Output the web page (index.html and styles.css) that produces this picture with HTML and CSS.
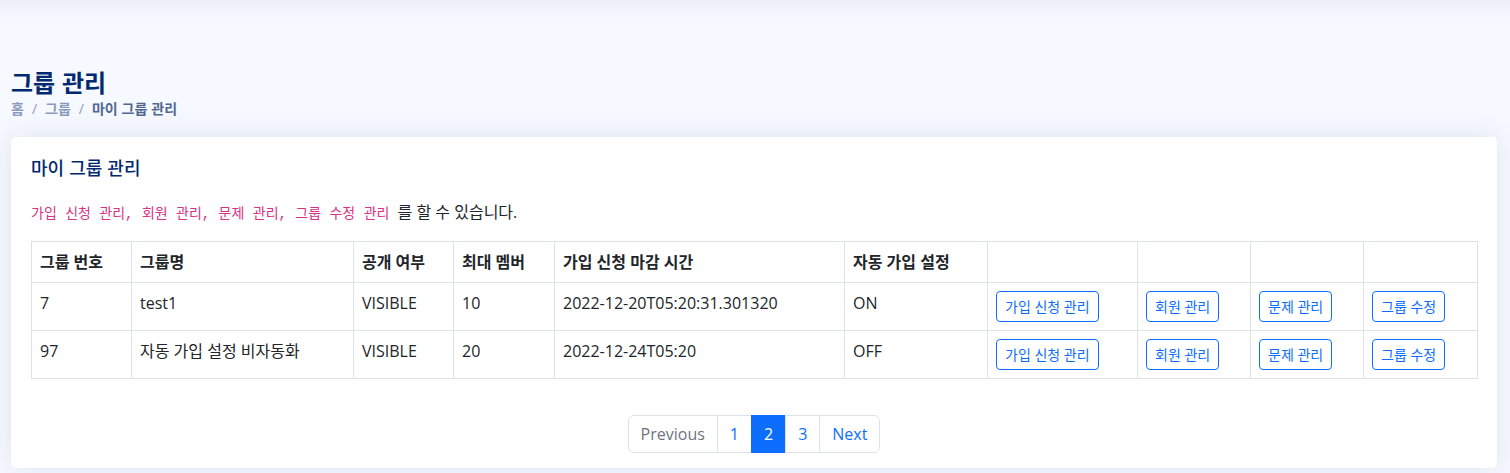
FILE: index.html
```html
<!DOCTYPE html>
<html lang="ko">
<head>
<meta charset="utf-8">
<title>그룹 관리</title>
<link rel="stylesheet" href="styles.css">
</head>
<body>
<main class="main">
  <div class="pagetitle">
    <h1 class="pagetitle-h">그룹 관리</h1>
    <ol class="breadcrumb">
      <li class="crumb">홈</li>
      <li class="crumb sep">그룹</li>
      <li class="crumb sep active">마이 그룹 관리</li>
    </ol>
  </div>
  <section class="card">
    <div class="card-body">
      <h5 class="card-title">마이 그룹 관리</h5>
      <p class="desc"><code class="code">가입 신청 관리, 회원 관리, 문제 관리, 그룹 수정 관리</code> 를 할 수 있습니다.</p>
      <table class="table">
        <colgroup>
          <col class="c1"><col class="c2"><col class="c3"><col class="c4"><col class="c5">
          <col class="c6"><col class="c7"><col class="c8"><col class="c9"><col class="c10">
        </colgroup>
        <thead>
          <tr>
            <th>그룹 번호</th>
            <th>그룹명</th>
            <th>공개 여부</th>
            <th>최대 멤버</th>
            <th>가입 신청 마감 시간</th>
            <th>자동 가입 설정</th>
            <th></th><th></th><th></th><th></th>
          </tr>
        </thead>
        <tbody>
          <tr>
            <td>7</td>
            <td>test1</td>
            <td>VISIBLE</td>
            <td>10</td>
            <td>2022-12-20T05:20:31.301320</td>
            <td>ON</td>
            <td><button class="btn">가입 신청 관리</button></td>
            <td><button class="btn">회원 관리</button></td>
            <td><button class="btn">문제 관리</button></td>
            <td><button class="btn">그룹 수정</button></td>
          </tr>
          <tr>
            <td>97</td>
            <td>자동 가입 설정 비자동화</td>
            <td>VISIBLE</td>
            <td>20</td>
            <td>2022-12-24T05:20</td>
            <td>OFF</td>
            <td><button class="btn">가입 신청 관리</button></td>
            <td><button class="btn">회원 관리</button></td>
            <td><button class="btn">문제 관리</button></td>
            <td><button class="btn">그룹 수정</button></td>
          </tr>
        </tbody>
      </table>
      <nav class="pager">
        <ul class="pagination">
          <li class="page-item"><span class="page-link disabled">Previous</span></li>
          <li class="page-item"><span class="page-link">1</span></li>
          <li class="page-item"><span class="page-link current">2</span></li>
          <li class="page-item"><span class="page-link">3</span></li>
          <li class="page-item"><span class="page-link">Next</span></li>
        </ul>
      </nav>
    </div>
  </section>
</main>
</body>
</html>
```

FILE: styles.css
```css
* { box-sizing: border-box; }

html, body {
  margin: 0;
  height: 100%;
}

body {
  font-family: "Open Sans", "Noto Sans CJK KR", sans-serif;
  font-size: 16px;
  line-height: 1.5;
  color: #212529;
  background: linear-gradient(to bottom, #eceff7 0px, #f3f6fd 14px, #f6f9ff 30px, #f6f9ff 100%);
  overflow: hidden;
}

.main {
  padding: 68px 13px 0 11px;
}

.pagetitle {
  margin-bottom: 18px;
}

.pagetitle-h {
  margin: 0;
  font-size: 24px;
  line-height: 1.2;
  font-weight: 700;
  color: #012970;
  font-family: "Noto Sans CJK KR", "Open Sans", sans-serif;
}

.breadcrumb {
  display: flex;
  list-style: none;
  margin: 0;
  padding: 1px 0 0;
  font-size: 14px;
  line-height: 20px;
  font-weight: 600;
  color: #899bbd;
  font-family: "Noto Sans CJK KR", "Open Sans", sans-serif;
}

.crumb.sep {
  padding-left: 8px;
}

.crumb.sep::before {
  content: "/";
  padding-right: 8px;
  color: #899bbd;
  font-family: "Open Sans", sans-serif;
  font-weight: 400;
}

.crumb.active {
  color: #51678f;
  font-weight: 700;
}

.card {
  background: #fff;
  border-radius: 5px;
  box-shadow: 0 0 30px rgba(1, 41, 112, 0.1);
}

.card-body {
  padding: 0 20px 15px;
}

.card-title {
  margin: 0;
  padding: 20px 0 22px;
  font-size: 18px;
  line-height: 1.2;
  font-weight: 500;
  color: #012970;
  font-family: "Noto Sans CJK KR", sans-serif;
}

.desc {
  margin: 0 0 16px;
}

.code {
  font-family: "Liberation Mono", "Noto Sans CJK KR", monospace;
  font-size: 14px;
  color: #d63384;
  margin-right: 4px;
}

.table {
  width: 100%;
  border-collapse: collapse;
  table-layout: fixed;
  margin: 0;
}

.c1 { width: 100px; }
.c2 { width: 222px; }
.c3 { width: 100px; }
.c4 { width: 101px; }
.c5 { width: 290px; }
.c6 { width: 143px; }
.c7 { width: 150px; }
.c8 { width: 113px; }
.c9 { width: 113px; }
.c10 { width: 114px; }

.table th,
.table td {
  border: 1px solid #dee2e6;
  padding: 8px;
  text-align: left;
  vertical-align: top;
  white-space: nowrap;
}

.table th {
  font-weight: 700;
  height: 41px;
  padding-bottom: 7px;
}

.table td {
  height: 48px;
}

.btn {
  display: inline-block;
  font-family: "Open Sans", "Noto Sans CJK KR", sans-serif;
  font-size: 14px;
  line-height: 21px;
  padding: 4px 8px;
  color: #0d6efd;
  background: #fff;
  border: 1px solid #0d6efd;
  border-radius: 4px;
  margin: 0;
}

.pager {
  margin-top: 36px;
  display: flex;
  justify-content: center;
}

.pagination {
  display: flex;
  list-style: none;
  margin: 0;
  padding: 0;
}

.page-link {
  display: block;
  padding: 6px 12px;
  line-height: 24px;
  color: #0d6efd;
  background: #fff;
  border: 1px solid #dee2e6;
  margin-left: -1px;
}

.page-item:first-child .page-link {
  margin-left: 0;
  border-radius: 6px 0 0 6px;
}

.page-item:last-child .page-link {
  border-radius: 0 6px 6px 0;
}

.page-link.disabled {
  color: #6c757d;
}

.page-link.current {
  background: #0d6efd;
  border-color: #0d6efd;
  color: #fff;
}
```
